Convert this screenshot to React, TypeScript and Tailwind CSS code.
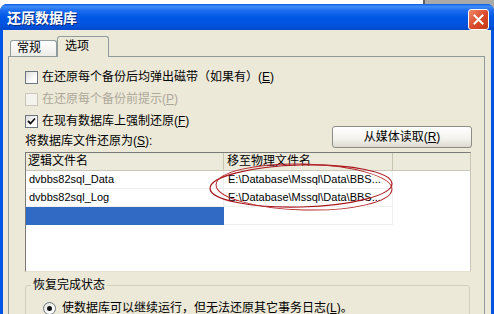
import React from 'react'

const FONT = "font-['Liberation_Sans','Noto_Sans_CJK_SC',sans-serif]"

function Accel({ ch }: { ch: string }) {
  return (
    <>
      (<span className="underline underline-offset-1">{ch}</span>)
    </>
  )
}

function CheckBox({ checked = false, disabled = false }: { checked?: boolean; disabled?: boolean }) {
  return (
    <div
      className={`w-[13px] h-[13px] border shrink-0 flex items-center justify-center ${
        disabled
          ? 'border-[#c9c7ba] bg-[#f4f3ee]'
          : 'border-[#6c7580] bg-[linear-gradient(135deg,#dcdcd7,#ffffff_70%)]'
      }`}
    >
      {checked && (
        <svg width="9" height="9" viewBox="0 0 9 9">
          <path d="M1 4 L3.5 6.5 L8 1.5" fill="none" stroke="#111" strokeWidth="1.8" />
        </svg>
      )}
    </div>
  )
}

function TitleBar() {
  return (
    <div className="h-[28px] rounded-t-[7px] flex justify-between items-start bg-[linear-gradient(to_bottom,#0a5ee8_0%,#3f8cf6_10%,#1c6cf0_25%,#0058e6_50%,#0053dd_80%,#0049cc_100%)]">
      <div className="pl-[7px] pt-[5px] text-[14px] leading-[18px] font-bold text-white [text-shadow:1px_1px_0_#0a2a80]">
        还原数据库
      </div>
      <div className="mt-[5px] mr-[5px] w-[21px] h-[21px] rounded-[3px] border border-white flex items-center justify-center bg-[linear-gradient(135deg,#f0896a,#d9492a_55%,#c23a18)]">
        <svg width="11" height="11" viewBox="0 0 11 11">
          <path d="M1.5 1.5 L9.5 9.5 M9.5 1.5 L1.5 9.5" stroke="#fff" strokeWidth="2" strokeLinecap="square" />
        </svg>
      </div>
    </div>
  )
}

function FileTable() {
  const rows = [
    { logical: 'dvbbs82sql_Data', physical: 'E:\\Database\\Mssql\\Data\\BBS...' },
    { logical: 'dvbbs82sql_Log', physical: 'E:\\Database\\Mssql\\Data\\BBS...' },
  ]
  return (
    <div className="relative mt-[4px] w-[446px] h-[120px] border border-t-[#7a7a7a] border-l-[#7a7a7a] border-r-[#c9c6b8] border-b-[#e4e1d3] bg-white">
      <div className="flex h-[18px] bg-[#ebeadb] border-b border-[#cbc7b8] text-[12px] leading-[17px]">
        <div className="w-[198px] pl-[2px] border-r border-[#c7c5b2]">逻辑文件名</div>
        <div className="w-[169px] pl-[3px] border-r border-[#c7c5b2]">移至物理文件名</div>
        <div className="flex-1" />
      </div>
      {rows.map((r, i) => (
        <div key={i} className="flex h-[18px] text-[11px] leading-[17px]">
          <div className="w-[198px] pl-[3px] border-r border-b border-[#efefef]">{r.logical}</div>
          <div className="w-[169px] pl-[4px] border-r border-b border-[#efefef]">{r.physical}</div>
        </div>
      ))}
      <div className="flex h-[18px]">
        <div className="w-[198px] bg-[#316ac5]" />
        <div className="w-[169px] border-r border-b border-[#efefef]" />
      </div>
      <svg className="absolute left-0 top-0 pointer-events-none overflow-visible" width="446" height="119">
        <ellipse cx="275" cy="33" rx="91" ry="21" transform="rotate(-1.5 275 33)" fill="none" stroke="#a8161c" strokeWidth="1.2" />
        <ellipse cx="278" cy="34" rx="88" ry="23" transform="rotate(1.5 278 34)" fill="none" stroke="#b5252a" strokeWidth="1" />
      </svg>
    </div>
  )
}

export default function App() {
  return (
    <div
      className={`w-[494px] h-[314px] overflow-hidden pt-[4px] text-[12px] text-black ${FONT} bg-[linear-gradient(to_right,#ffffff_423px,#5f5f5f_423px,#5f5f5f_425px,#a9a9a9_425px)]`}
    >
      <div className="h-[310px] rounded-t-[7px] bg-[#0055e5] flex flex-col">
        <TitleBar />
        <div className="flex-1 mx-[3px] bg-[#ece9d8] pl-[5px] flex flex-col">
          {/* tabs */}
          <div className="h-[26px] flex items-end pl-[2px]">
            <div className="w-[47px] h-[16px] border border-b-0 border-[#919b9c] rounded-t-[3px] pl-[6px] leading-[15px] bg-[linear-gradient(to_bottom,#ffffff,#ecebe6)]">
              常规
            </div>
            <div className="relative z-10 -mb-px w-[52px] h-[21px] border border-b-0 border-[#919b9c] rounded-t-[3px] pl-[7px] pt-[1px] leading-[17px] bg-[#ece9d8]">
              选项
            </div>
          </div>

          {/* panel */}
          <div className="w-[477px] flex-1 border border-b-0 border-[#919b9c] pl-[16px] pr-[12px] pt-[9px] flex flex-col">
            <div className="h-[22px] flex items-center gap-[4px]">
              <CheckBox />
              <span className="leading-[14px]">
                在还原每个备份后均弹出磁带（如果有）<Accel ch="E" />
              </span>
            </div>
            <div className="h-[22px] flex items-center gap-[4px]">
              <CheckBox disabled />
              <span className="leading-[14px] text-[#aca899]">
                在还原每个备份前提示<Accel ch="P" />
              </span>
            </div>
            <div className="h-[22px] flex items-center gap-[4px]">
              <CheckBox checked />
              <span className="leading-[14px]">
                在现有数据库上强制还原<Accel ch="F" />
              </span>
            </div>
            <div className="-mt-[6px] h-[22px] flex justify-between items-end">
              <span className="leading-[14px]">
                将数据库文件还原为<Accel ch="S" />:
              </span>
              <div className="w-[140px] h-[22px] rounded-[3px] border border-[#8d8d86] flex items-center justify-center leading-[14px] bg-[linear-gradient(to_bottom,#ffffff,#f3f2ec_60%,#dcdad0)]">
                从媒体读取<Accel ch="R" />
              </div>
            </div>

            <FileTable />

            <fieldset className="mt-[6px] w-[445px] h-[60px] border border-[#d0d0bf] rounded-[3px]">
              <legend className="ml-[5px] px-[2px] leading-[14px]">恢复完成状态</legend>
              <div className="pl-[17px] pt-[9px] flex items-center gap-[6px]">
                <div className="w-[13px] h-[13px] rounded-full border border-[#6c7580] bg-[linear-gradient(135deg,#dcdcd7,#ffffff_70%)] flex items-center justify-center">
                  <div className="w-[5px] h-[5px] rounded-full bg-[#111]" />
                </div>
                <span className="leading-[14px]">
                  使数据库可以继续运行，但无法还原其它事务日志<Accel ch="L" />。
                </span>
              </div>
            </fieldset>
          </div>
        </div>
      </div>
    </div>
  )
}
